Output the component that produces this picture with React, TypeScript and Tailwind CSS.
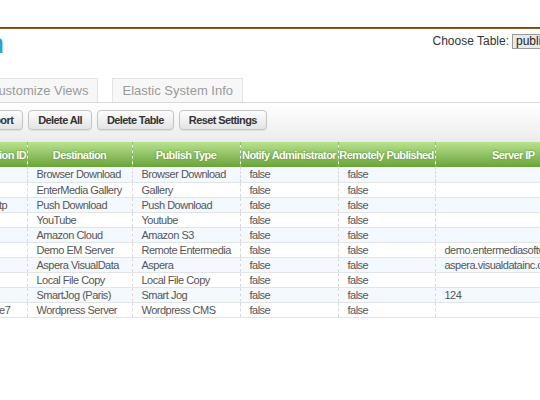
import React from 'react';

const rows = [
    { id: '0', dest: 'Browser Download', type: 'Browser Download', ip: '' },
    { id: '1', dest: 'EnterMedia Gallery', type: 'Gallery', ip: '' },
    { id: 'pushhttp', dest: 'Push Download', type: 'Push Download', ip: '' },
    { id: '3', dest: 'YouTube', type: 'Youtube', ip: '' },
    { id: '4', dest: 'Amazon Cloud', type: 'Amazon S3', ip: '' },
    { id: '5', dest: 'Demo EM Server', type: 'Remote Entermedia', ip: 'demo.entermediasoftware.com' },
    { id: '6', dest: 'Aspera VisualData', type: 'Aspera', ip: 'aspera.visualdatainc.com' },
    { id: '7', dest: 'Local File Copy', type: 'Local File Copy', ip: '' },
    { id: '8', dest: 'SmartJog (Paris)', type: 'Smart Jog', ip: '124' },
    { id: '4a9fc1e7', dest: 'Wordpress Server', type: 'Wordpress CMS', ip: '' },
];

const headers = ['Destination ID', 'Destination', 'Publish Type', 'Notify Administrator', 'Remotely Published', 'Server IP'];
const widths = ['w-[67px]', 'w-[105px]', 'w-[108px]', 'w-[98px]', 'w-[97px]', 'w-[156px]'];

function ToolButton({ label }: { label: string }) {
    return (
        <button className="h-[20px] rounded-[4px] border border-[#c4c4c4] bg-gradient-to-b from-[#fdfdfd] to-[#e4e4e4] px-[9px] text-[11px] leading-[18px] font-bold tracking-[-0.6px] text-[#333] shadow-[0_1px_1px_rgba(0,0,0,0.08)]">
            {label}
        </button>
    );
}

export default function App() {
    return (
        <div className="h-[400px] w-[540px] overflow-hidden bg-white font-['Liberation_Sans',Arial,sans-serif]">
            <div className="h-[27px]" />
            <div className="h-[2px] w-full bg-gradient-to-b from-[#6b3a14] to-[#9a6433]" />

            <div className="flex h-[50px] items-start">
                <h1 className="ml-[-136px] mt-[-1px] shrink-0 text-[28px] leading-[32px] font-normal whitespace-nowrap text-[#2a9fcf]">
                    Destination
                </h1>
                <div className="flex-1" />
                <div className="mr-[-82px] mt-[3px] flex shrink-0 items-center gap-[3px] text-[12px] whitespace-nowrap text-[#333]">
                    <span>Choose Table:</span>
                    <span className="inline-block h-[15px] w-[110px] overflow-hidden border border-[#9a9a9a] bg-[#e9e9e9] px-[3px] text-[12px] leading-[13px] text-[#222]">
                        publishdestination
                    </span>
                </div>
            </div>

            <div className="flex h-[24px] items-end gap-[14px] border-b border-[#dadada]">
                <div className="ml-[-21px] h-[24px] shrink-0 border border-b-0 border-[#e3e3e3] bg-[#f7f7f7] px-[9px] text-[13px] leading-[23px] whitespace-nowrap text-[#9a9a9a]">
                    Customize Views
                </div>
                <div className="h-[24px] shrink-0 border border-b-0 border-[#e3e3e3] bg-[#f7f7f7] px-[9px] text-[13px] leading-[23px] whitespace-nowrap text-[#9a9a9a]">
                    Elastic System Info
                </div>
            </div>

            <div className="h-[39px] bg-gradient-to-b from-[#ffffff] to-[#ececec] pt-[7px]">
                <div className="ml-[-28px] flex gap-[5px]">
                    <ToolButton label="Export" />
                    <ToolButton label="Delete All" />
                    <ToolButton label="Delete Table" />
                    <ToolButton label="Reset Settings" />
                </div>
            </div>

            <table className="ml-[-40px] w-[631px] min-w-[631px] table-fixed border-collapse text-[11px]">
                <thead>
                    <tr className="h-[25px] bg-gradient-to-b from-[#b9e28f] to-[#6aa338]">
                        {headers.map((h, i) => (
                            <th
                                key={h}
                                className={`${widths[i]} overflow-hidden p-0 text-center leading-[24px] font-bold tracking-[-0.6px] whitespace-nowrap text-white [text-shadow:0_0_2px_#4d7f26] ${i > 0 ? 'border-l border-dashed border-[#8dbd62]' : ''}`}
                            >
                                {h}
                            </th>
                        ))}
                    </tr>
                </thead>
                <tbody>
                    {rows.map((r, i) => (
                        <tr key={r.dest} className={`h-[15px] border-b border-[#e2e5e8] ${i % 2 === 0 ? 'bg-[#f4f9ff]' : 'bg-white'}`}>
                            {[r.id, r.dest, r.type, 'false', 'false', r.ip].map((c, j) => (
                                <td
                                    key={j}
                                    className={`overflow-hidden py-0 pl-[9px] leading-[14px] tracking-[-0.5px] whitespace-nowrap text-[#555] ${j > 0 ? 'border-l border-dashed border-[#d8d8d8]' : ''}`}
                                >
                                    {c}
                                </td>
                            ))}
                        </tr>
                    ))}
                </tbody>
            </table>
        </div>
    );
}
